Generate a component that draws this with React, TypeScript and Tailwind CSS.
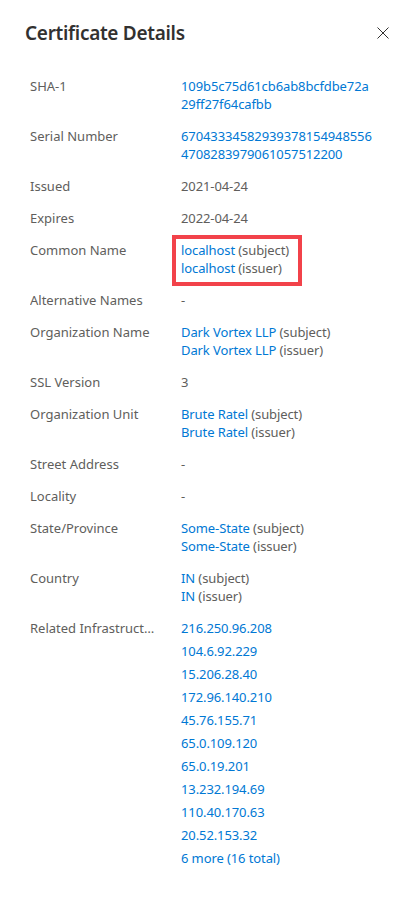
import React from 'react';

type Part = { text: string; link?: boolean };
type Row = { label: string; lines: Part[][]; list?: boolean; marked?: boolean };

const subj = (v: string): Part[] => [{ text: v, link: true }, { text: ' (subject)' }];
const iss = (v: string): Part[] => [{ text: v, link: true }, { text: ' (issuer)' }];

const ips = [
  '216.250.96.208',
  '104.6.92.229',
  '15.206.28.40',
  '172.96.140.210',
  '45.76.155.71',
  '65.0.109.120',
  '65.0.19.201',
  '13.232.194.69',
  '110.40.170.63',
  '20.52.153.32',
  '6 more (16 total)',
];

const rows: Row[] = [
  { label: 'SHA-1', lines: [[{ text: '109b5c75d61cb6ab8bcfdbe72a', link: true }], [{ text: '29ff27f64cafbb', link: true }]] },
  { label: 'Serial Number', lines: [[{ text: '67043334582939378154948556', link: true }], [{ text: '4708283979061057512200', link: true }]] },
  { label: 'Issued', lines: [[{ text: '2021-04-24' }]] },
  { label: 'Expires', lines: [[{ text: '2022-04-24' }]] },
  { label: 'Common Name', lines: [subj('localhost'), iss('localhost')], marked: true },
  { label: 'Alternative Names', lines: [[{ text: '-' }]] },
  { label: 'Organization Name', lines: [subj('Dark Vortex LLP'), iss('Dark Vortex LLP')] },
  { label: 'SSL Version', lines: [[{ text: '3' }]] },
  { label: 'Organization Unit', lines: [subj('Brute Ratel'), iss('Brute Ratel')] },
  { label: 'Street Address', lines: [[{ text: '-' }]] },
  { label: 'Locality', lines: [[{ text: '-' }]] },
  { label: 'State/Province', lines: [subj('Some-State'), iss('Some-State')] },
  { label: 'Country', lines: [subj('IN'), iss('IN')] },
  { label: 'Related Infrastructure', lines: ips.map((ip) => [{ text: ip, link: true }]), list: true },
];

const App: React.FC = () => {
  return (
    <div className="min-h-[905px] w-[413px] bg-white text-[#323130]" style={{ fontFamily: '"Noto Sans", "Open Sans", sans-serif' }}>
      <div className="flex items-center justify-between pl-[25px] pr-[24px] pt-[19px]">
        <h1 className="text-[19px] font-semibold leading-[28px] tracking-[-0.3px] text-[#323130]">Certificate Details</h1>
        <svg width="12" height="12" viewBox="0 0 12 12" className="text-[#323130]">
          <path d="M0.5 0.5 L11.5 11.5 M11.5 0.5 L0.5 11.5" stroke="currentColor" strokeWidth="1" fill="none" />
        </svg>
      </div>

      <div className="mt-[30px] flex flex-col gap-[14px] pl-[30px] pr-[20px] text-[13px] leading-[18px]">
        {rows.map((row) => (
          <div key={row.label} className="flex">
            <div className="mr-[20px] w-[131px] shrink-0 truncate text-[#605e5c]">{row.label}</div>
            <div className={row.list ? 'relative flex flex-col gap-[5px]' : 'relative flex flex-col'}>
              {row.lines.map((line, i) => (
                <div key={i} className="whitespace-nowrap tracking-[-0.1px]">
                  {line.map((p, j) => (
                    <span key={j} className={p.link ? 'text-[#0078d4]' : 'text-[#605e5c]'}>
                      {p.text}
                    </span>
                  ))}
                </div>
              ))}
              {row.marked && (
                <div className="pointer-events-none absolute -left-[9px] -top-[6px] h-[51px] w-[130px] border-[4px] border-[#f2424a]" />
              )}
            </div>
          </div>
        ))}
      </div>
    </div>
  );
};

export default App;
